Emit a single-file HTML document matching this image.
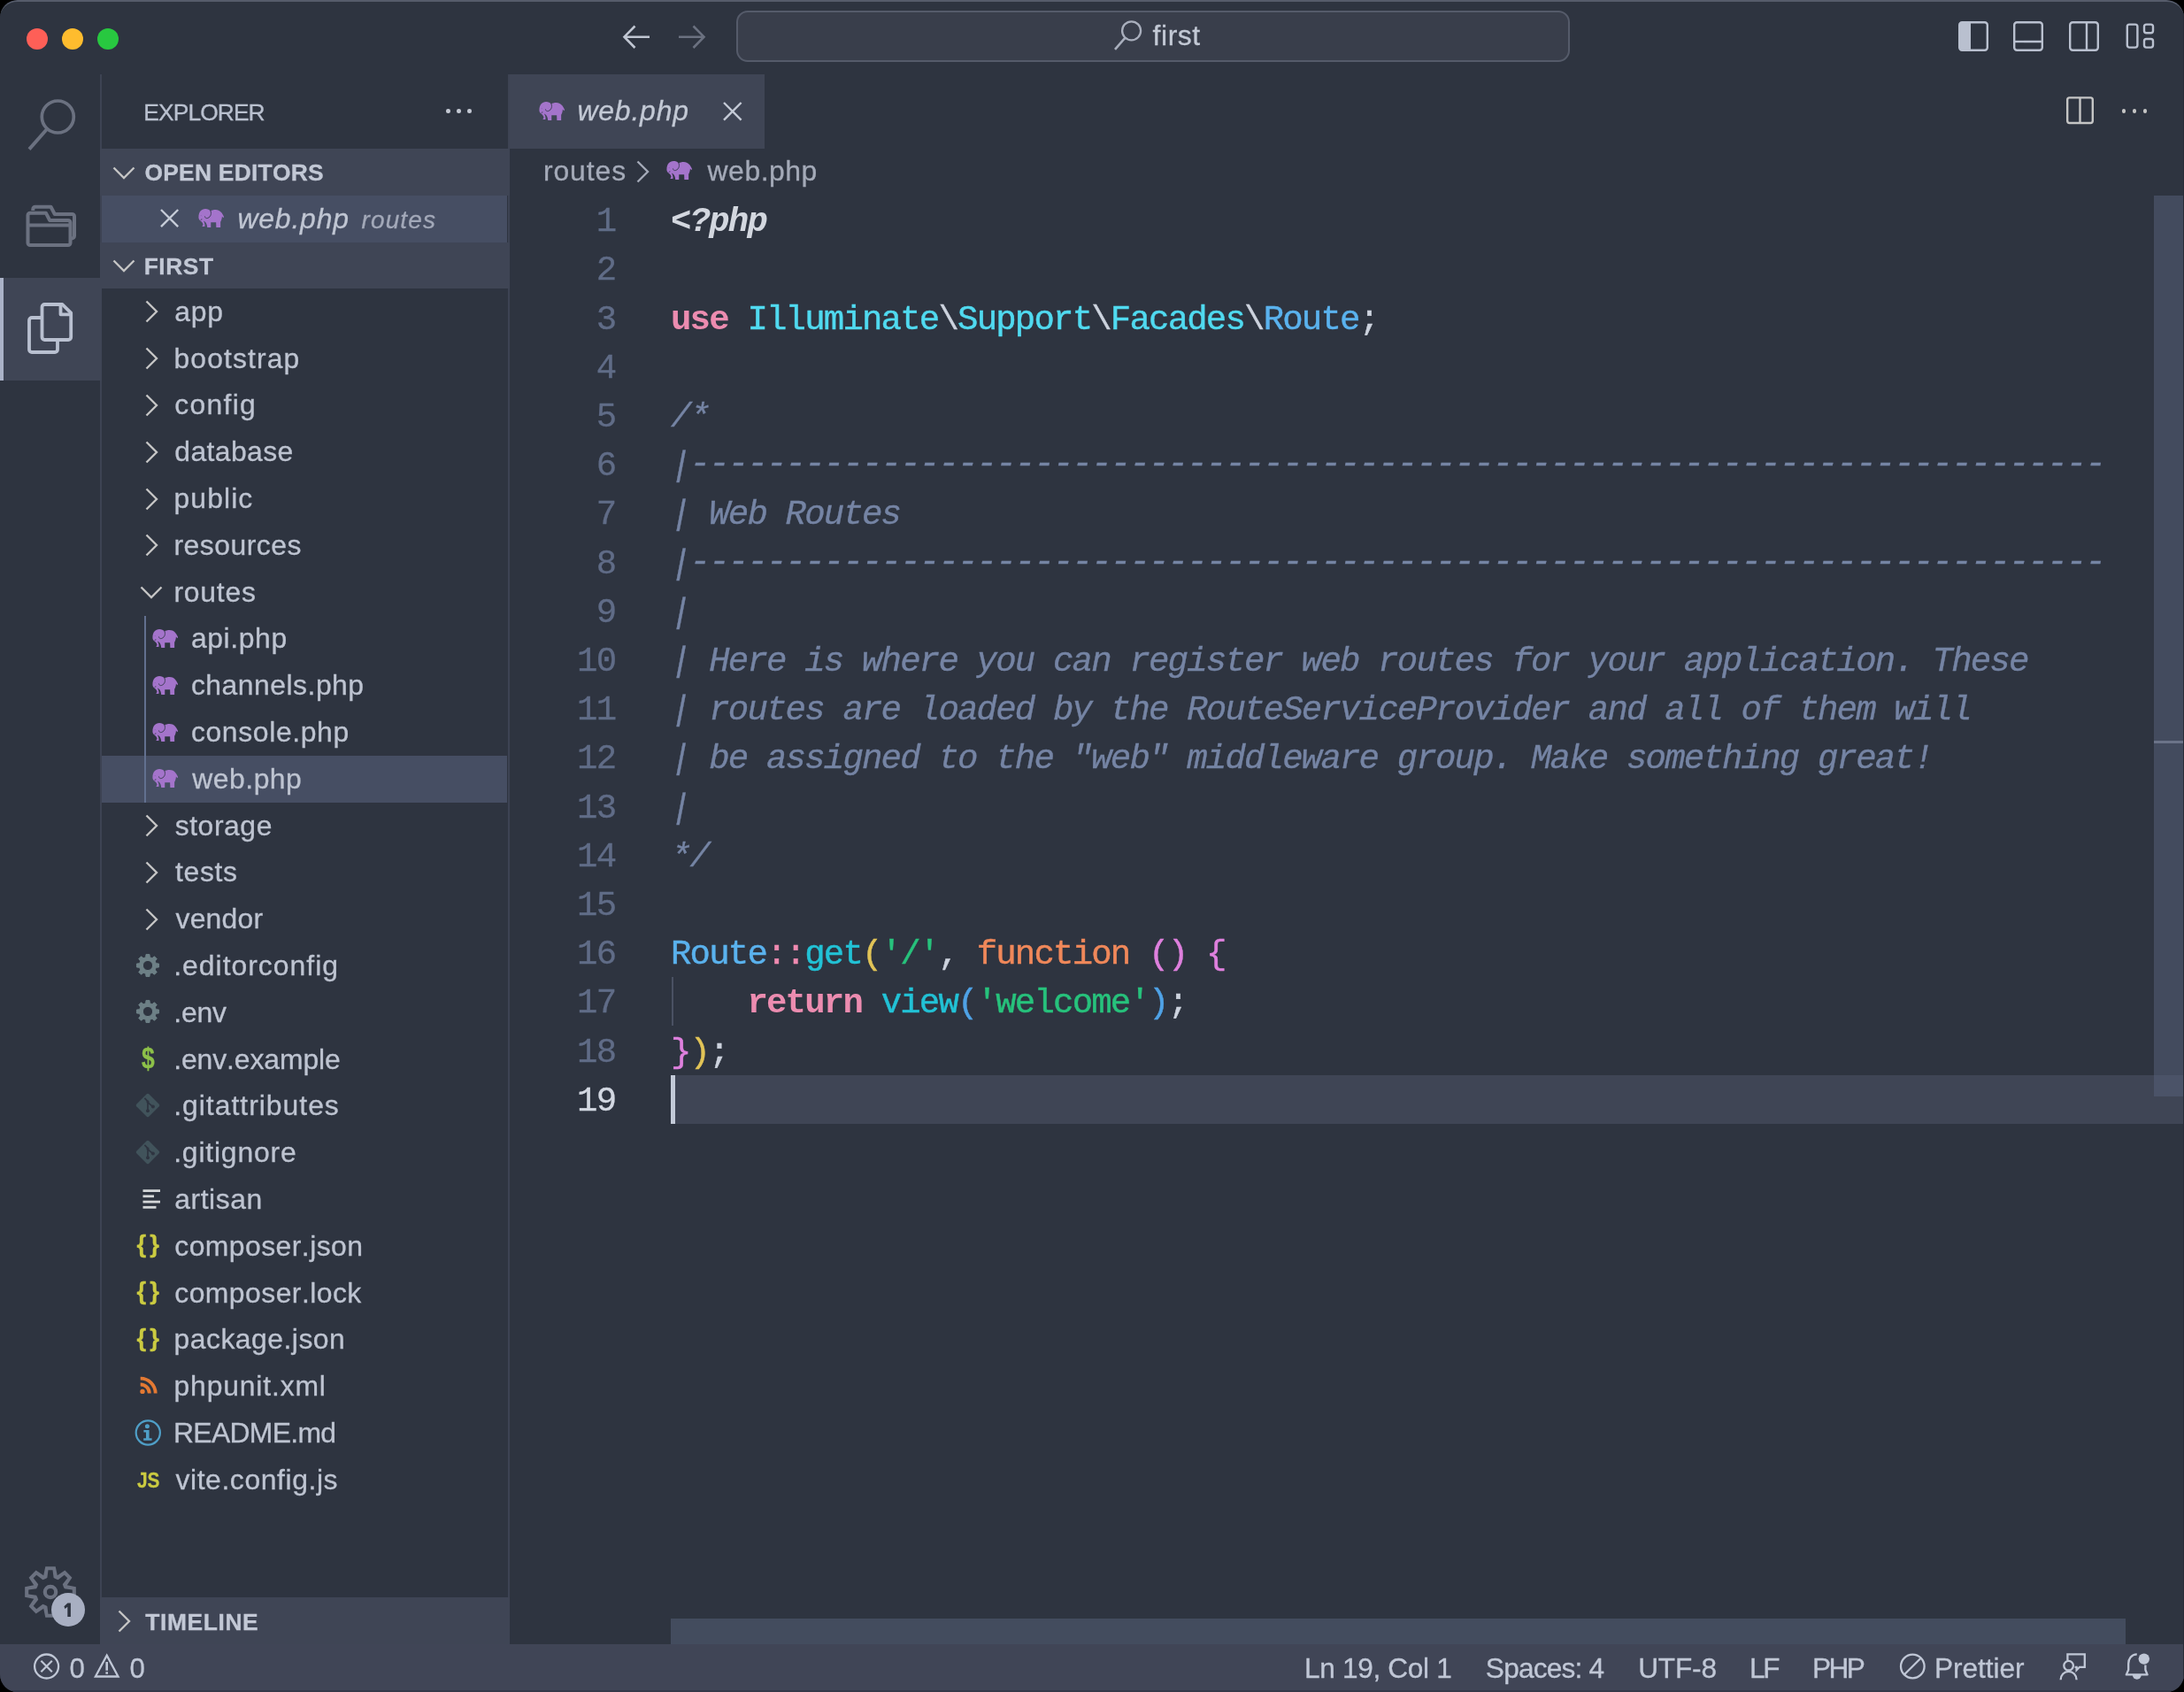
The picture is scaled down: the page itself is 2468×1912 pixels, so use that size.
<!DOCTYPE html>
<html><head><meta charset="utf-8"><title>web.php - first</title>
<style>
html,body{margin:0;padding:0;background:#000;}
body{width:2468px;height:1912px;overflow:hidden;position:relative;font-family:"Liberation Sans",sans-serif;}
.ab{position:absolute;display:block;}
.x{position:absolute;white-space:pre;height:0;line-height:0;font-kerning:none;-webkit-text-stroke:0.3px;}
#win{-webkit-font-smoothing:antialiased;will-change:transform;position:absolute;left:0;top:0;width:2468px;height:1912px;background:#2e3440;border-radius:20px;overflow:hidden;}
.t{position:absolute;white-space:pre;color:#bec4d1;font-size:31.2px;line-height:52.8px;height:52.8px;}
.b{font-weight:bold;}
.i{font-style:italic;}
.code{position:absolute;white-space:pre;font-family:"Liberation Mono",monospace;font-size:39px;letter-spacing:-1.804px;line-height:0;height:0;color:#cdd3de;left:758px;font-kerning:none;-webkit-text-stroke:0.45px;}
.ln{position:absolute;white-space:pre;font-family:"Liberation Mono",monospace;font-size:39px;letter-spacing:-1.804px;line-height:0;height:0;color:#606c87;width:140px;left:555.30px;text-align:right;font-kerning:none;-webkit-text-stroke:0.3px;}
.c{color:#7584a4;font-style:italic;-webkit-text-stroke:0.35px;}
.sk{display:inline-block;transform:skewX(-11deg);}
.kw{color:#ec8cb0;font-weight:bold;-webkit-text-stroke:0;}
.ns{color:#50daf0;}
.cl{color:#5ab2ee;}
.fn{color:#22c2d6;}
.st{color:#27c27c;}
.fu{color:#f0885a;}
.b1{color:#e2c457;}
.b2{color:#df80de;}
.b3{color:#4fa2e6;}
.pk{color:#ef8ab0;}
.sb{position:absolute;white-space:pre;color:#c0c7d6;font-size:31.2px;line-height:54px;top:1858px;height:54px;}
</style></head><body><div id="win">

<div class="ab" style="left:0;top:0;width:2468px;height:60px;box-sizing:border-box;border-top:2px solid #565c6b;border-radius:20px 20px 0 0"></div>
<div class="ab" style="left:30px;top:32px;width:24px;height:24px;border-radius:50%;background:#fe5f57"></div>
<div class="ab" style="left:70px;top:32px;width:24px;height:24px;border-radius:50%;background:#febc2e"></div>
<div class="ab" style="left:110px;top:32px;width:24px;height:24px;border-radius:50%;background:#28c840"></div>
<svg class="ab" style="left:700px;top:24px" width="40" height="36" viewBox="0 0 40 36"><path fill="none" stroke="#c0c6d2" stroke-width="2.6" d="M34 17.7H6M17.5 5.5L5.5 17.7L17.5 30"/></svg>
<svg class="ab" style="left:762px;top:24px" width="40" height="36" viewBox="0 0 40 36"><path fill="none" stroke="#6b7180" stroke-width="2.6" d="M5 17.7H33M21.5 5.5L33.5 17.7L21.5 30"/></svg>
<div class="ab" style="left:832px;top:12px;width:938px;height:54px;border:2px solid #555b6a;border-radius:13px;background:#393e4b"></div>
<svg class="ab" style="left:1254px;top:20px" width="44" height="40" viewBox="0 0 44 40"><circle cx="24.6" cy="14.8" r="10.5" fill="none" stroke="#a9afbd" stroke-width="2.3"/><path stroke="#a9afbd" stroke-width="2.6" d="M17.6 22.6L6 35.8"/></svg>
<div class="x" style="left:1302.55px;top:40.00px;font-size:31.9px;color:#c3c9d5;letter-spacing:0.575px;">first</div>
<svg class="ab" style="left:2211px;top:22px" width="38" height="38" viewBox="0 0 38 38"><rect x="3.2" y="3.2" width="31.6" height="31.6" rx="3" fill="none" stroke="#b9c0cf" stroke-width="2.4"/><path fill="#b9c0cf" d="M6 3.2H16V34.8H6a3 3 0 0 1-3-3V6.2a3 3 0 0 1 3-3Z"/></svg>
<svg class="ab" style="left:2273px;top:22px" width="38" height="38" viewBox="0 0 38 38"><rect x="3.2" y="3.2" width="31.6" height="31.6" rx="3" fill="none" stroke="#b9c0cf" stroke-width="2.4"/><path stroke="#b9c0cf" stroke-width="2.4" d="M3.2 25H34.8"/></svg>
<svg class="ab" style="left:2336px;top:22px" width="38" height="38" viewBox="0 0 38 38"><rect x="3.2" y="3.2" width="31.6" height="31.6" rx="3" fill="none" stroke="#b9c0cf" stroke-width="2.4"/><path stroke="#b9c0cf" stroke-width="2.4" d="M22 3.2V34.8"/></svg>
<svg class="ab" style="left:2400px;top:22px" width="38" height="38" viewBox="0 0 38 38"><rect x="3.8" y="5.6" width="11.6" height="26" rx="2.5" fill="none" stroke="#b9c0cf" stroke-width="2.4"/><rect x="23" y="5.6" width="10" height="9.6" rx="2.5" fill="none" stroke="#b9c0cf" stroke-width="2.4"/><rect x="23" y="22" width="10" height="9.6" rx="2.5" fill="none" stroke="#b9c0cf" stroke-width="2.4"/></svg>
<div class="ab" style="left:113px;top:84px;width:2px;height:1774px;background:#3d4353"></div>
<div class="ab" style="left:0;top:314px;width:115px;height:116px;background:#3f4555"></div>
<div class="ab" style="left:0;top:314px;width:4px;height:116px;background:#aab2c7"></div>
<svg class="ab" style="left:24px;top:104px" width="70" height="76" viewBox="0 0 70 76"><circle cx="41.3" cy="28" r="18" fill="none" stroke="#6b7180" stroke-width="3.7"/><path stroke="#6b7180" stroke-width="3.9" d="M29.2 41.8L9 64.6"/></svg>
<svg class="ab" style="left:24px;top:226px" width="70" height="60" viewBox="0 0 70 60"><g fill="none" stroke="#6b7180" stroke-width="4" stroke-linejoin="round"><path d="M13.3 12V10.3a2.5 2.5 0 0 1 2.5-2.5H33.5L37.8 16H57.5a2.5 2.5 0 0 1 2.5 2.5V40.5a3 3 0 0 1-3 3"/><path d="M10 14.8H28L32.2 23H53a2.5 2.5 0 0 1 2.5 2.5V48.5a2.5 2.5 0 0 1-2.5 2.5H10a2.5 2.5 0 0 1-2.5-2.5V17.3a2.5 2.5 0 0 1 2.5-2.5Z"/><path d="M7.5 28.5H55.5"/></g></svg>
<svg class="ab" style="left:24px;top:336px" width="70" height="70" viewBox="0 0 70 70"><g fill="none" stroke="#b9c0d0" stroke-width="3.8" stroke-linejoin="round"><path d="M26.5 8H46.5L56.2 17.7V45a3 3 0 0 1-3 3H26.5a3 3 0 0 1-3-3V11a3 3 0 0 1 3-3Z"/><path d="M44.5 8V19.3H56.2"/><path d="M23.5 23H12a3 3 0 0 0-3 3V59a3 3 0 0 0 3 3H38a3 3 0 0 0 3-3V48"/></g></svg>
<svg class="ab" style="left:25.4px;top:1767.1px" width="64" height="64" viewBox="-32 -32 64 64"><path fill="#6b7180" fill-rule="evenodd" d="M-5.71 -28.84L5.71 -28.84L7.77 -18.75L16.36 -24.43L24.43 -16.36L18.75 -7.77L28.84 -5.71L28.84 5.71L18.75 7.77L24.43 16.36L16.36 24.43L7.77 18.75L5.71 28.84L-5.71 28.84L-7.77 18.75L-16.36 24.43L-24.43 16.36L-18.75 7.77L-28.84 5.71L-28.84 -5.71L-18.75 -7.77L-24.43 -16.36L-16.36 -24.43L-7.77 -18.75ZM-2.52 -24.77L2.52 -24.77L3.64 -15.89L6.08 -14.69L8.66 -13.81L15.74 -19.30L19.30 -15.74L13.81 -8.66L14.69 -6.08L15.89 -3.64L24.77 -2.52L24.77 2.52L15.89 3.64L14.69 6.08L13.81 8.66L19.30 15.74L15.74 19.30L8.66 13.81L6.08 14.69L3.64 15.89L2.52 24.77L-2.52 24.77L-3.64 15.89L-6.08 14.69L-8.66 13.81L-15.74 19.30L-19.30 15.74L-13.81 8.66L-14.69 6.08L-15.89 3.64L-24.77 2.52L-24.77 -2.52L-15.89 -3.64L-14.69 -6.08L-13.81 -8.66L-19.30 -15.74L-15.74 -19.30L-8.66 -13.81L-6.08 -14.69L-3.64 -15.89ZM8.3 0A8.3 8.3 0 1 0 -8.3 0A8.3 8.3 0 1 0 8.3 0ZM4.1 0A4.1 4.1 0 1 0 -4.1 0A4.1 4.1 0 1 0 4.1 0Z"/></svg>
<div class="ab" style="left:58px;top:1800px;width:38px;height:38px;border-radius:50%;background:#a8afc2"></div>
<svg class="ab" style="left:66px;top:1806px" width="22" height="26" viewBox="66 1806 22 26"><path fill="#2e3440" d="M76.4 1811.5H79.9V1827H76.3V1815.7L73.4 1817.9L72.4 1815.2L76.4 1811.5Z"/></svg>
<div class="ab" style="left:574px;top:84px;width:2px;height:1774px;background:#3d4353"></div>
<div class="x" style="left:162.33px;top:127.00px;font-size:26.4px;color:#b9c0cf;letter-spacing:-0.913px;">EXPLORER</div>
<div class="ab" style="left:504.2px;top:123.4px;width:4.6px;height:4.6px;border-radius:50%;background:#c3c8d3"></div>
<div class="ab" style="left:516.3000000000001px;top:123.4px;width:4.6px;height:4.6px;border-radius:50%;background:#c3c8d3"></div>
<div class="ab" style="left:528.3000000000001px;top:123.4px;width:4.6px;height:4.6px;border-radius:50%;background:#c3c8d3"></div>
<div class="ab" style="left:113px;top:168px;width:463px;height:52.8px;background:#3f4555"></div>
<svg class="ab" style="left:123.5px;top:182.5px" width="32" height="24" viewBox="-16 -12 32 24"><path fill="none" stroke="#c5c5c5" stroke-width="2.4" d="M-11.5 -5.5L0 6L11.5 -5.5"/></svg>
<div class="x" style="left:163.42px;top:195.00px;font-size:26.4px;color:#c2c8d5;letter-spacing:0.256px;font-weight:bold;">OPEN EDITORS</div>
<div class="ab" style="left:115px;top:220.8px;width:458px;height:52.8px;background:#464e63"></div>
<svg class="ab" style="left:179.9px;top:235.4px" width="23.2" height="23.2" viewBox="-11.6 -11.6 23.2 23.2"><path fill="none" stroke="#c5cbd7" stroke-width="2.4" d="M-9.6 -9.6L9.6 9.6M9.6 -9.6L-9.6 9.6"/></svg>
<svg class="ab" style="left:224.3px;top:236px" width="29.5" height="21.2" viewBox="0 0 30 21.6"><path fill="#a474cb" d="M0.4 9.6C0.4 3.6 3.6 0 8.2 0C10.8 0 12.9 1 14.1 2.5C15.6 1.4 17.6 0.9 20 0.9C25 0.9 27.7 4.6 29.6 9.2L28.8 10.4L27.4 8.6C27.4 11.6 26.3 13.6 25.6 15.1L25.6 21.4L20.7 21.4L20.5 15.5L14.5 15.5L14.5 21.4L10.4 21.4C10.1 18.1 9.1 14.9 5.9 13.7C7.6 16.1 7.9 18.6 7.5 20.4L4.4 20.4L5.5 18.3C5.7 16.6 4.1 14.6 1.6 12.9C0.8 12.1 0.4 10.9 0.4 9.6Z"/><path fill="none" stroke="#343a4b" stroke-width="0.9" d="M13.9 1.6C15.6 5.2 14.6 9.2 11 10.6C9 11.3 7.8 10.3 7.6 8.6"/><circle cx="3.2" cy="7.7" r="0.6" fill="#8a5fb0"/><path fill="#343a4b" d="M2.3 12.9L4.2 11.3L4.4 12.6Z"/></svg>
<div class="x" style="left:268.41px;top:246.50px;font-size:31.9px;color:#c0c6d3;letter-spacing:0.835px;font-style:italic;">web.php</div>
<div class="x" style="left:408.54px;top:248.50px;font-size:28px;color:#a3a9b9;letter-spacing:1.124px;font-style:italic;">routes</div>
<div class="ab" style="left:113px;top:273.6px;width:463px;height:52.8px;background:#3f4555"></div>
<svg class="ab" style="left:123.5px;top:288.1px" width="32" height="24" viewBox="-16 -12 32 24"><path fill="none" stroke="#c5c5c5" stroke-width="2.4" d="M-11.5 -5.5L0 6L11.5 -5.5"/></svg>
<div class="x" style="left:162.73px;top:301.10px;font-size:26.4px;color:#c2c8d5;letter-spacing:0.522px;font-weight:bold;">FIRST</div>
<div class="ab" style="left:113px;top:1805px;width:463px;height:53px;background:#3f4555"></div>
<svg class="ab" style="left:127.5px;top:1816px" width="24" height="32" viewBox="-12 -16 24 32"><path fill="none" stroke="#c5c5c5" stroke-width="2.4" d="M-5.5 -11.5L6 0L-5.5 11.5"/></svg>
<div class="x" style="left:164.20px;top:1832.50px;font-size:26.4px;color:#c2c8d5;letter-spacing:0.619px;font-weight:bold;">TIMELINE</div>
<div class="ab" style="left:115px;top:854.0px;width:458px;height:52.8px;background:#464e63"></div>
<div class="ab" style="left:163px;top:695.5999999999999px;width:2px;height:211.2px;background:#62708f"></div>
<svg class="ab" style="left:159px;top:336.4px" width="24" height="32" viewBox="-12 -16 24 32"><path fill="none" stroke="#c5c5c5" stroke-width="2.4" d="M-5.5 -11.5L6 0L-5.5 11.5"/></svg>
<div class="x" style="left:197.24px;top:351.80px;font-size:31.9px;color:#bec4d1;letter-spacing:0.785px;">app</div>
<svg class="ab" style="left:159px;top:389.2px" width="24" height="32" viewBox="-12 -16 24 32"><path fill="none" stroke="#c5c5c5" stroke-width="2.4" d="M-5.5 -11.5L6 0L-5.5 11.5"/></svg>
<div class="x" style="left:196.54px;top:404.60px;font-size:31.9px;color:#bec4d1;letter-spacing:1.099px;">bootstrap</div>
<svg class="ab" style="left:159px;top:442.0px" width="24" height="32" viewBox="-12 -16 24 32"><path fill="none" stroke="#c5c5c5" stroke-width="2.4" d="M-5.5 -11.5L6 0L-5.5 11.5"/></svg>
<div class="x" style="left:197.24px;top:457.40px;font-size:31.9px;color:#bec4d1;letter-spacing:1.297px;">config</div>
<svg class="ab" style="left:159px;top:494.79999999999995px" width="24" height="32" viewBox="-12 -16 24 32"><path fill="none" stroke="#c5c5c5" stroke-width="2.4" d="M-5.5 -11.5L6 0L-5.5 11.5"/></svg>
<div class="x" style="left:197.26px;top:510.20px;font-size:31.9px;color:#bec4d1;letter-spacing:0.400px;">database</div>
<svg class="ab" style="left:159px;top:547.6px" width="24" height="32" viewBox="-12 -16 24 32"><path fill="none" stroke="#c5c5c5" stroke-width="2.4" d="M-5.5 -11.5L6 0L-5.5 11.5"/></svg>
<div class="x" style="left:196.54px;top:563.00px;font-size:31.9px;color:#bec4d1;letter-spacing:1.090px;">public</div>
<svg class="ab" style="left:159px;top:600.4px" width="24" height="32" viewBox="-12 -16 24 32"><path fill="none" stroke="#c5c5c5" stroke-width="2.4" d="M-5.5 -11.5L6 0L-5.5 11.5"/></svg>
<div class="x" style="left:196.48px;top:615.80px;font-size:31.9px;color:#bec4d1;letter-spacing:0.489px;">resources</div>
<svg class="ab" style="left:154.5px;top:656.6999999999999px" width="32" height="24" viewBox="-16 -12 32 24"><path fill="none" stroke="#c5c5c5" stroke-width="2.4" d="M-11.5 -5.5L0 6L11.5 -5.5"/></svg>
<div class="x" style="left:196.48px;top:668.60px;font-size:31.9px;color:#bec4d1;letter-spacing:0.762px;">routes</div>
<svg class="ab" style="left:171.7px;top:710.9999999999999px" width="29.5" height="21.2" viewBox="0 0 30 21.6"><path fill="#a474cb" d="M0.4 9.6C0.4 3.6 3.6 0 8.2 0C10.8 0 12.9 1 14.1 2.5C15.6 1.4 17.6 0.9 20 0.9C25 0.9 27.7 4.6 29.6 9.2L28.8 10.4L27.4 8.6C27.4 11.6 26.3 13.6 25.6 15.1L25.6 21.4L20.7 21.4L20.5 15.5L14.5 15.5L14.5 21.4L10.4 21.4C10.1 18.1 9.1 14.9 5.9 13.7C7.6 16.1 7.9 18.6 7.5 20.4L4.4 20.4L5.5 18.3C5.7 16.6 4.1 14.6 1.6 12.9C0.8 12.1 0.4 10.9 0.4 9.6Z"/><path fill="none" stroke="#343a4b" stroke-width="0.9" d="M13.9 1.6C15.6 5.2 14.6 9.2 11 10.6C9 11.3 7.8 10.3 7.6 8.6"/><circle cx="3.2" cy="7.7" r="0.6" fill="#8a5fb0"/><path fill="#343a4b" d="M2.3 12.9L4.2 11.3L4.4 12.6Z"/></svg>
<div class="x" style="left:215.94px;top:721.40px;font-size:31.9px;color:#bec4d1;letter-spacing:0.606px;">api.php</div>
<svg class="ab" style="left:171.7px;top:763.8px" width="29.5" height="21.2" viewBox="0 0 30 21.6"><path fill="#a474cb" d="M0.4 9.6C0.4 3.6 3.6 0 8.2 0C10.8 0 12.9 1 14.1 2.5C15.6 1.4 17.6 0.9 20 0.9C25 0.9 27.7 4.6 29.6 9.2L28.8 10.4L27.4 8.6C27.4 11.6 26.3 13.6 25.6 15.1L25.6 21.4L20.7 21.4L20.5 15.5L14.5 15.5L14.5 21.4L10.4 21.4C10.1 18.1 9.1 14.9 5.9 13.7C7.6 16.1 7.9 18.6 7.5 20.4L4.4 20.4L5.5 18.3C5.7 16.6 4.1 14.6 1.6 12.9C0.8 12.1 0.4 10.9 0.4 9.6Z"/><path fill="none" stroke="#343a4b" stroke-width="0.9" d="M13.9 1.6C15.6 5.2 14.6 9.2 11 10.6C9 11.3 7.8 10.3 7.6 8.6"/><circle cx="3.2" cy="7.7" r="0.6" fill="#8a5fb0"/><path fill="#343a4b" d="M2.3 12.9L4.2 11.3L4.4 12.6Z"/></svg>
<div class="x" style="left:215.94px;top:774.20px;font-size:31.9px;color:#bec4d1;letter-spacing:0.492px;">channels.php</div>
<svg class="ab" style="left:171.7px;top:816.6px" width="29.5" height="21.2" viewBox="0 0 30 21.6"><path fill="#a474cb" d="M0.4 9.6C0.4 3.6 3.6 0 8.2 0C10.8 0 12.9 1 14.1 2.5C15.6 1.4 17.6 0.9 20 0.9C25 0.9 27.7 4.6 29.6 9.2L28.8 10.4L27.4 8.6C27.4 11.6 26.3 13.6 25.6 15.1L25.6 21.4L20.7 21.4L20.5 15.5L14.5 15.5L14.5 21.4L10.4 21.4C10.1 18.1 9.1 14.9 5.9 13.7C7.6 16.1 7.9 18.6 7.5 20.4L4.4 20.4L5.5 18.3C5.7 16.6 4.1 14.6 1.6 12.9C0.8 12.1 0.4 10.9 0.4 9.6Z"/><path fill="none" stroke="#343a4b" stroke-width="0.9" d="M13.9 1.6C15.6 5.2 14.6 9.2 11 10.6C9 11.3 7.8 10.3 7.6 8.6"/><circle cx="3.2" cy="7.7" r="0.6" fill="#8a5fb0"/><path fill="#343a4b" d="M2.3 12.9L4.2 11.3L4.4 12.6Z"/></svg>
<div class="x" style="left:215.94px;top:827.00px;font-size:31.9px;color:#bec4d1;letter-spacing:0.626px;">console.php</div>
<svg class="ab" style="left:171.7px;top:869.4px" width="29.5" height="21.2" viewBox="0 0 30 21.6"><path fill="#a474cb" d="M0.4 9.6C0.4 3.6 3.6 0 8.2 0C10.8 0 12.9 1 14.1 2.5C15.6 1.4 17.6 0.9 20 0.9C25 0.9 27.7 4.6 29.6 9.2L28.8 10.4L27.4 8.6C27.4 11.6 26.3 13.6 25.6 15.1L25.6 21.4L20.7 21.4L20.5 15.5L14.5 15.5L14.5 21.4L10.4 21.4C10.1 18.1 9.1 14.9 5.9 13.7C7.6 16.1 7.9 18.6 7.5 20.4L4.4 20.4L5.5 18.3C5.7 16.6 4.1 14.6 1.6 12.9C0.8 12.1 0.4 10.9 0.4 9.6Z"/><path fill="none" stroke="#343a4b" stroke-width="0.9" d="M13.9 1.6C15.6 5.2 14.6 9.2 11 10.6C9 11.3 7.8 10.3 7.6 8.6"/><circle cx="3.2" cy="7.7" r="0.6" fill="#8a5fb0"/><path fill="#343a4b" d="M2.3 12.9L4.2 11.3L4.4 12.6Z"/></svg>
<div class="x" style="left:217.35px;top:879.80px;font-size:31.9px;color:#bec4d1;letter-spacing:0.481px;">web.php</div>
<svg class="ab" style="left:159px;top:917.1999999999999px" width="24" height="32" viewBox="-12 -16 24 32"><path fill="none" stroke="#c5c5c5" stroke-width="2.4" d="M-5.5 -11.5L6 0L-5.5 11.5"/></svg>
<div class="x" style="left:197.71px;top:932.60px;font-size:31.9px;color:#bec4d1;letter-spacing:0.551px;">storage</div>
<svg class="ab" style="left:159px;top:969.9999999999999px" width="24" height="32" viewBox="-12 -16 24 32"><path fill="none" stroke="#c5c5c5" stroke-width="2.4" d="M-5.5 -11.5L6 0L-5.5 11.5"/></svg>
<div class="x" style="left:198.12px;top:985.40px;font-size:31.9px;color:#bec4d1;letter-spacing:0.617px;">tests</div>
<svg class="ab" style="left:159px;top:1022.8px" width="24" height="32" viewBox="-12 -16 24 32"><path fill="none" stroke="#c5c5c5" stroke-width="2.4" d="M-5.5 -11.5L6 0L-5.5 11.5"/></svg>
<div class="x" style="left:198.49px;top:1038.20px;font-size:31.9px;color:#bec4d1;letter-spacing:0.220px;">vendor</div>
<svg class="ab" style="left:152.2px;top:1075.6px" width="30" height="30" viewBox="-15 -15 30 30"><path fill="#6d8086" fill-rule="evenodd" stroke="#6d8086" stroke-width="1" stroke-linejoin="round" d="M-1.99 -12.54L1.99 -12.54L2.32 -9.31L4.94 -8.23L7.46 -10.27L10.27 -7.46L8.23 -4.94L9.31 -2.32L12.54 -1.99L12.54 1.99L9.31 2.32L8.23 4.94L10.27 7.46L7.46 10.27L4.94 8.23L2.32 9.31L1.99 12.54L-1.99 12.54L-2.32 9.31L-4.94 8.23L-7.46 10.27L-10.27 7.46L-8.23 4.94L-9.31 2.32L-12.54 1.99L-12.54 -1.99L-9.31 -2.32L-8.23 -4.94L-10.27 -7.46L-7.46 -10.27L-4.94 -8.23L-2.32 -9.31ZM5.6 0A5.6 5.6 0 1 0 -5.6 0A5.6 5.6 0 1 0 5.6 0Z"/></svg>
<div class="x" style="left:196.19px;top:1091.00px;font-size:31.9px;color:#bec4d1;letter-spacing:1.007px;">.editorconfig</div>
<svg class="ab" style="left:152.2px;top:1128.4px" width="30" height="30" viewBox="-15 -15 30 30"><path fill="#6d8086" fill-rule="evenodd" stroke="#6d8086" stroke-width="1" stroke-linejoin="round" d="M-1.99 -12.54L1.99 -12.54L2.32 -9.31L4.94 -8.23L7.46 -10.27L10.27 -7.46L8.23 -4.94L9.31 -2.32L12.54 -1.99L12.54 1.99L9.31 2.32L8.23 4.94L10.27 7.46L7.46 10.27L4.94 8.23L2.32 9.31L1.99 12.54L-1.99 12.54L-2.32 9.31L-4.94 8.23L-7.46 10.27L-10.27 7.46L-8.23 4.94L-9.31 2.32L-12.54 1.99L-12.54 -1.99L-9.31 -2.32L-8.23 -4.94L-10.27 -7.46L-7.46 -10.27L-4.94 -8.23L-2.32 -9.31ZM5.6 0A5.6 5.6 0 1 0 -5.6 0A5.6 5.6 0 1 0 5.6 0Z"/></svg>
<div class="x" style="left:196.19px;top:1143.80px;font-size:31.9px;color:#bec4d1;letter-spacing:-0.158px;">.env</div>
<div class="x" style="left:159.65px;top:1195.80px;font-size:33.5px;color:#8dc149;letter-spacing:0.000px;font-weight:bold;transform:scaleX(0.7903);transform-origin:0 0;">$</div>
<div class="x" style="left:196.19px;top:1196.60px;font-size:31.9px;color:#bec4d1;letter-spacing:-0.100px;">.env.example</div>
<svg class="ab" style="left:152px;top:1234.0px" width="30" height="30" viewBox="-15 -15 30 30"><rect x="-9.9" y="-9.9" width="19.8" height="19.8" rx="1.8" transform="rotate(45)" fill="#41535b"/><g stroke="#2e3440" stroke-width="1.7" fill="none"><path d="M-3.6 -8.2L0 -4.4V6"/><path d="M0 -3.2L5.6 1.4"/></g><circle cx="0" cy="6.2" r="2" fill="#2e3440"/><circle cx="5.9" cy="1.6" r="2" fill="#2e3440"/><circle cx="0" cy="-4" r="1.6" fill="#2e3440"/></svg>
<div class="x" style="left:196.19px;top:1249.40px;font-size:31.9px;color:#bec4d1;letter-spacing:0.992px;">.gitattributes</div>
<svg class="ab" style="left:152px;top:1286.8000000000002px" width="30" height="30" viewBox="-15 -15 30 30"><rect x="-9.9" y="-9.9" width="19.8" height="19.8" rx="1.8" transform="rotate(45)" fill="#41535b"/><g stroke="#2e3440" stroke-width="1.7" fill="none"><path d="M-3.6 -8.2L0 -4.4V6"/><path d="M0 -3.2L5.6 1.4"/></g><circle cx="0" cy="6.2" r="2" fill="#2e3440"/><circle cx="5.9" cy="1.6" r="2" fill="#2e3440"/><circle cx="0" cy="-4" r="1.6" fill="#2e3440"/></svg>
<div class="x" style="left:196.19px;top:1302.20px;font-size:31.9px;color:#bec4d1;letter-spacing:0.811px;">.gitignore</div>
<svg class="ab" style="left:152px;top:1340.1px" width="30" height="30" viewBox="-15 -15 30 30"><g fill="#d3d6d8"><rect x="-5.5" y="-10.8" width="19.5" height="2.8"/><rect x="-5.5" y="-4.6" width="12.5" height="2.8"/><rect x="-5.5" y="1.7" width="19.5" height="2.8"/><rect x="-5.5" y="7.9" width="15" height="2.8"/></g></svg>
<div class="x" style="left:197.24px;top:1355.00px;font-size:31.9px;color:#bec4d1;letter-spacing:0.530px;">artisan</div>
<div class="x" style="left:154.56px;top:1406.00px;font-size:27.6px;color:#cbcb41;letter-spacing:3.981px;font-weight:bold;">{}</div>
<div class="x" style="left:197.24px;top:1407.80px;font-size:31.9px;color:#bec4d1;letter-spacing:0.449px;">composer.json</div>
<div class="x" style="left:154.56px;top:1458.80px;font-size:27.6px;color:#cbcb41;letter-spacing:3.981px;font-weight:bold;">{}</div>
<div class="x" style="left:197.24px;top:1460.60px;font-size:31.9px;color:#bec4d1;letter-spacing:0.455px;">composer.lock</div>
<div class="x" style="left:154.56px;top:1511.60px;font-size:27.6px;color:#cbcb41;letter-spacing:3.981px;font-weight:bold;">{}</div>
<div class="x" style="left:196.54px;top:1513.40px;font-size:31.9px;color:#bec4d1;letter-spacing:0.485px;">package.json</div>
<svg class="ab" style="left:152.5px;top:1550.3px" width="30" height="30" viewBox="-15 -15 30 30"><g fill="none" stroke="#e37933" stroke-width="3.9"><path d="M-9.3 -7.4A17 17 0 0 1 7.7 9.6"/><path d="M-9.3 -0.5A10.1 10.1 0 0 1 0.8 9.6"/></g><circle cx="-7" cy="7.4" r="2.7" fill="#e37933"/></svg>
<div class="x" style="left:196.54px;top:1566.20px;font-size:31.9px;color:#bec4d1;letter-spacing:0.826px;">phpunit.xml</div>
<svg class="ab" style="left:149.2px;top:1601.1px" width="36" height="36" viewBox="-18 -18 36 36"><circle cx="0.3" cy="0" r="13.6" fill="none" stroke="#4f9fc7" stroke-width="2.2"/><circle cx="-0.6" cy="-7.2" r="2.5" fill="#4f9fc7"/><path fill="#4f9fc7" d="M-4.6 -3H1.6V6.2H4.6V8.8H-4.8V6.2H-2V-0.6H-4.6Z"/></svg>
<div class="x" style="left:195.98px;top:1619.00px;font-size:31.9px;color:#bec4d1;letter-spacing:-0.685px;">README.md</div>
<div class="x" style="left:154.68px;top:1673.10px;font-size:24.6px;color:#cbcb41;letter-spacing:0.000px;font-weight:bold;transform:scaleX(0.8485);transform-origin:0 0;">JS</div>
<div class="x" style="left:198.49px;top:1671.80px;font-size:31.9px;color:#bec4d1;letter-spacing:0.580px;">vite.config.js</div>
<div class="ab" style="left:576px;top:84px;width:288px;height:84px;background:#3f4555"></div>
<svg class="ab" style="left:609px;top:114.5px" width="29.5" height="21.2" viewBox="0 0 30 21.6"><path fill="#a474cb" d="M0.4 9.6C0.4 3.6 3.6 0 8.2 0C10.8 0 12.9 1 14.1 2.5C15.6 1.4 17.6 0.9 20 0.9C25 0.9 27.7 4.6 29.6 9.2L28.8 10.4L27.4 8.6C27.4 11.6 26.3 13.6 25.6 15.1L25.6 21.4L20.7 21.4L20.5 15.5L14.5 15.5L14.5 21.4L10.4 21.4C10.1 18.1 9.1 14.9 5.9 13.7C7.6 16.1 7.9 18.6 7.5 20.4L4.4 20.4L5.5 18.3C5.7 16.6 4.1 14.6 1.6 12.9C0.8 12.1 0.4 10.9 0.4 9.6Z"/><path fill="none" stroke="#343a4b" stroke-width="0.9" d="M13.9 1.6C15.6 5.2 14.6 9.2 11 10.6C9 11.3 7.8 10.3 7.6 8.6"/><circle cx="3.2" cy="7.7" r="0.6" fill="#8a5fb0"/><path fill="#343a4b" d="M2.3 12.9L4.2 11.3L4.4 12.6Z"/></svg>
<div class="x" style="left:652.41px;top:125.00px;font-size:31.9px;color:#c3c9d5;letter-spacing:0.835px;font-style:italic;">web.php</div>
<svg class="ab" style="left:816.2px;top:114.0px" width="23.6" height="23.6" viewBox="-11.8 -11.8 23.6 23.6"><path fill="none" stroke="#c5cbd7" stroke-width="2.4" d="M-9.8 -9.8L9.8 9.8M9.8 -9.8L-9.8 9.8"/></svg>
<svg class="ab" style="left:2333px;top:107px" width="36" height="36" viewBox="0 0 36 36"><rect x="3.2" y="3.4" width="28.6" height="28.6" rx="2.4" fill="none" stroke="#c5c5c5" stroke-width="2.4"/><path stroke="#c5c5c5" stroke-width="2.4" d="M17.5 3.4V32"/></svg>
<div class="ab" style="left:2397.7px;top:123.4px;width:4.6px;height:4.6px;border-radius:50%;background:#c5c5c5"></div>
<div class="ab" style="left:2409.7px;top:123.4px;width:4.6px;height:4.6px;border-radius:50%;background:#c5c5c5"></div>
<div class="ab" style="left:2421.7px;top:123.4px;width:4.6px;height:4.6px;border-radius:50%;background:#c5c5c5"></div>
<div class="x" style="left:613.88px;top:193.00px;font-size:31.9px;color:#a4aab8;letter-spacing:0.922px;">routes</div>
<svg class="ab" style="left:714px;top:177.5px" width="24" height="32" viewBox="-12 -16 24 32"><path fill="none" stroke="#a4aab8" stroke-width="2.4" d="M-5.5 -11.5L6 0L-5.5 11.5"/></svg>
<svg class="ab" style="left:753.3px;top:182.4px" width="29.5" height="21.2" viewBox="0 0 30 21.6"><path fill="#a474cb" d="M0.4 9.6C0.4 3.6 3.6 0 8.2 0C10.8 0 12.9 1 14.1 2.5C15.6 1.4 17.6 0.9 20 0.9C25 0.9 27.7 4.6 29.6 9.2L28.8 10.4L27.4 8.6C27.4 11.6 26.3 13.6 25.6 15.1L25.6 21.4L20.7 21.4L20.5 15.5L14.5 15.5L14.5 21.4L10.4 21.4C10.1 18.1 9.1 14.9 5.9 13.7C7.6 16.1 7.9 18.6 7.5 20.4L4.4 20.4L5.5 18.3C5.7 16.6 4.1 14.6 1.6 12.9C0.8 12.1 0.4 10.9 0.4 9.6Z"/><path fill="none" stroke="#343a4b" stroke-width="0.9" d="M13.9 1.6C15.6 5.2 14.6 9.2 11 10.6C9 11.3 7.8 10.3 7.6 8.6"/><circle cx="3.2" cy="7.7" r="0.6" fill="#8a5fb0"/><path fill="#343a4b" d="M2.3 12.9L4.2 11.3L4.4 12.6Z"/></svg>
<div class="x" style="left:799.55px;top:193.00px;font-size:31.9px;color:#a4aab8;letter-spacing:0.531px;">web.php</div>
<div class="ab" style="left:758px;top:1215.2px;width:1710px;height:55.2px;background:#3f4555"></div>
<div class="ab" style="left:2434px;top:220.8px;width:33px;height:1018px;background:rgba(86,97,121,0.53)"></div>
<div class="ab" style="left:2434px;top:836.5px;width:33px;height:3px;background:#6b7388"></div>
<div class="ab" style="left:758px;top:1829px;width:1644px;height:29px;background:#434c5e"></div>
<div class="ab" style="left:758px;top:1215.2px;width:4.5px;height:55.2px;background:#c3cad8"></div>
<div class="ab" style="left:759px;top:1104.0px;width:2px;height:55.2px;background:#4a5163"></div>
<div class="ln" style="top:251.10000000000002px;color:#606c87">1</div>
<div class="code" style="top:251.10000000000002px"><span class="b i" style="color:#d3d7df;-webkit-text-stroke:0">&lt;?php</span></div>
<div class="ln" style="top:306.3px;color:#606c87">2</div>
<div class="ln" style="top:361.50000000000006px;color:#606c87">3</div>
<div class="code" style="top:361.50000000000006px"><span class="kw">use</span> <span class="ns">Illuminate</span>\<span class="ns">Support</span>\<span class="ns">Facades</span>\<span class="cl">Route</span>;</div>
<div class="ln" style="top:416.70000000000005px;color:#606c87">4</div>
<div class="ln" style="top:471.90000000000003px;color:#606c87">5</div>
<div class="code" style="top:471.90000000000003px"><span class="c">/*</span></div>
<div class="ln" style="top:527.1px;color:#606c87">6</div>
<div class="code" style="top:527.1px"><span class="c"><span class="sk">|</span><span style="position:relative;top:-2px">--------------------------------------------------------------------------</span></span></div>
<div class="ln" style="top:582.3px;color:#606c87">7</div>
<div class="code" style="top:582.3px"><span class="c"><span class="sk">|</span> Web Routes</span></div>
<div class="ln" style="top:637.5px;color:#606c87">8</div>
<div class="code" style="top:637.5px"><span class="c"><span class="sk">|</span><span style="position:relative;top:-2px">--------------------------------------------------------------------------</span></span></div>
<div class="ln" style="top:692.7px;color:#606c87">9</div>
<div class="code" style="top:692.7px"><span class="c"><span class="sk">|</span></span></div>
<div class="ln" style="top:747.9px;color:#606c87">10</div>
<div class="code" style="top:747.9px"><span class="c"><span class="sk">|</span> Here is where you can register web routes for your application. These</span></div>
<div class="ln" style="top:803.0999999999999px;color:#606c87">11</div>
<div class="code" style="top:803.0999999999999px"><span class="c"><span class="sk">|</span> routes are loaded by the RouteServiceProvider and all of them will</span></div>
<div class="ln" style="top:858.3px;color:#606c87">12</div>
<div class="code" style="top:858.3px"><span class="c"><span class="sk">|</span> be assigned to the "web" middleware group. Make something great!</span></div>
<div class="ln" style="top:913.5px;color:#606c87">13</div>
<div class="code" style="top:913.5px"><span class="c"><span class="sk">|</span></span></div>
<div class="ln" style="top:968.7px;color:#606c87">14</div>
<div class="code" style="top:968.7px"><span class="c">*/</span></div>
<div class="ln" style="top:1023.9000000000001px;color:#606c87">15</div>
<div class="ln" style="top:1079.1px;color:#606c87">16</div>
<div class="code" style="top:1079.1px"><span class="cl">Route</span><span class="pk">::</span><span class="fn">get</span><span class="b1">(</span><span class="st">'/'</span>, <span class="fu">function</span> <span class="b2">()</span> <span class="b2">{</span></div>
<div class="ln" style="top:1134.3px;color:#606c87">17</div>
<div class="code" style="top:1134.3px">    <span class="kw">return</span> <span class="fn">view</span><span class="b3">(</span><span class="st">'welcome'</span><span class="b3">)</span>;</div>
<div class="ln" style="top:1189.5px;color:#606c87">18</div>
<div class="code" style="top:1189.5px"><span class="b2">}</span><span class="b1">)</span>;</div>
<div class="ln" style="top:1244.7px;color:#d3d8e2">19</div>
<div class="ab" style="left:0;top:1858px;width:2468px;height:54px;background:#404556"></div>
<div class="ab" style="left:0;top:1910px;width:2468px;height:2px;background:#343949"></div>
<svg class="ab" style="left:36px;top:1866px" width="34" height="34" viewBox="0 0 34 34"><circle cx="16.6" cy="17" r="13.5" fill="none" stroke="#c0c7d6" stroke-width="2.3"/><path stroke="#c0c7d6" stroke-width="2.2" d="M10.4 10.8L22.8 23.2M22.8 10.8L10.4 23.2"/></svg>
<div class="x" style="left:78.38px;top:1885.50px;font-size:31.2px;color:#c0c7d6;letter-spacing:0.000px;">0</div>
<svg class="ab" style="left:103px;top:1864px" width="36" height="36" viewBox="0 0 36 36"><path fill="none" stroke="#c0c7d6" stroke-width="2.3" stroke-linejoin="miter" d="M17.7 6.6L30.5 30.5H4.9Z"/><path fill="#c0c7d6" d="M16.4 15.4H19V25H16.4ZM16.4 26.6H19V29H16.4Z" transform="translate(0,-1.3)"/></svg>
<div class="x" style="left:146.38px;top:1885.50px;font-size:31.2px;color:#c0c7d6;letter-spacing:0.000px;">0</div>
<div class="x" style="left:1474.01px;top:1884.50px;font-size:31.6px;color:#c0c7d6;letter-spacing:-0.334px;">Ln 19, Col 1</div>
<div class="x" style="left:1678.87px;top:1884.50px;font-size:31.6px;color:#c0c7d6;letter-spacing:-0.772px;">Spaces: 4</div>
<div class="x" style="left:1851.16px;top:1884.50px;font-size:31.6px;color:#c0c7d6;letter-spacing:-0.178px;">UTF-8</div>
<div class="x" style="left:1977.01px;top:1884.50px;font-size:31.6px;color:#c0c7d6;letter-spacing:-2.220px;">LF</div>
<div class="x" style="left:2048.01px;top:1884.50px;font-size:31.6px;color:#c0c7d6;letter-spacing:-2.558px;">PHP</div>
<div class="x" style="left:2186.01px;top:1884.50px;font-size:31.6px;color:#c0c7d6;letter-spacing:-0.034px;">Prettier</div>
<svg class="ab" style="left:2144px;top:1866px" width="34" height="34" viewBox="0 0 34 34"><circle cx="17.3" cy="17" r="13.3" fill="none" stroke="#c0c7d6" stroke-width="2.3"/><path stroke="#c0c7d6" stroke-width="2.3" d="M8 26.3L26.6 7.7"/></svg>
<svg class="ab" style="left:2324px;top:1864px" width="38" height="38" viewBox="0 0 38 38"><g fill="none" stroke="#c0c7d6" stroke-width="2.3"><path d="M12.4 12V5.3H31.8V19.8H26L22.6 23.2V19.8H20.6"/><circle cx="13.6" cy="18.2" r="5.3"/><path d="M4.6 34.2A9 9.4 0 0 1 22.6 34.2"/></g></svg>
<svg class="ab" style="left:2398px;top:1864px" width="38" height="38" viewBox="0 0 38 38"><g fill="none" stroke="#c0c7d6" stroke-width="2.3" stroke-linejoin="round"><path d="M16.8 5.4C10.4 5.6 7.2 10.4 7.2 16V23L4.8 28.4H28.6L26.4 23V17.6"/></g><path fill="#c0c7d6" d="M11.9 28.8A4.9 4.9 0 0 0 21.7 28.8Z"/><circle cx="24.8" cy="10.6" r="6.2" fill="#c0c7d6"/></svg>
<div class="ab" style="left:2467px;top:0;width:1px;height:1912px;background:#272b36"></div>
</div></body></html>
